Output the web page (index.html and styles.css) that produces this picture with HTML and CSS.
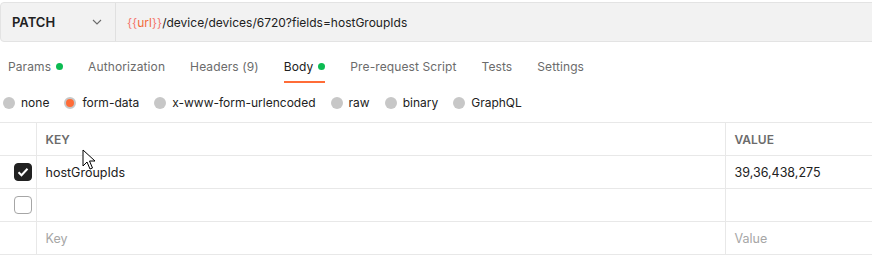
FILE: index.html
```html
<!DOCTYPE html>
<html lang="en">
<head>
  <meta charset="UTF-8">
  <title>PATCH request</title>
  <link rel="stylesheet" href="styles.css">
</head>
<body>
  <div class="url-bar">
    <div class="method">
      <span>PATCH</span>
      <svg class="chevron" width="10" height="6" viewBox="0 0 10 6"><path d="M1 1l4 4 4-4" fill="none" stroke="#6b6b6b" stroke-width="1.1"/></svg>
    </div>
    <div class="url"><span class="brace">{{</span><span class="var">url</span><span class="brace">}}</span>/device/devices/6720?fields=hostGroupIds</div>
  </div>

  <div class="tabs">
    <div class="tab">Params <span class="dot"></span></div>
    <div class="tab">Authorization</div>
    <div class="tab">Headers (9)</div>
    <div class="tab active">Body <span class="dot"></span></div>
    <div class="tab">Pre-request Script</div>
    <div class="tab">Tests</div>
    <div class="tab">Settings</div>
  </div>

  <div class="body-types">
    <label class="radio"><span class="circle"></span>none</label>
    <label class="radio"><span class="circle on"></span>form-data</label>
    <label class="radio"><span class="circle"></span>x-www-form-urlencoded</label>
    <label class="radio"><span class="circle"></span>raw</label>
    <label class="radio"><span class="circle"></span>binary</label>
    <label class="radio"><span class="circle"></span>GraphQL</label>
  </div>

  <div class="table-wrap">
    <table class="params">
      <colgroup>
        <col class="c-check">
        <col class="c-key">
        <col class="c-value">
      </colgroup>
      <thead>
        <tr>
          <th></th>
          <th>KEY</th>
          <th>VALUE</th>
        </tr>
      </thead>
      <tbody>
        <tr>
          <td class="check"><span class="box checked"><svg width="12" height="10" viewBox="0 0 12 10"><path d="M1.5 5.2l3 3 6-6.5" fill="none" stroke="#fff" stroke-width="2"/></svg></span></td>
          <td>hostGroupIds</td>
          <td>39,36,438,275</td>
        </tr>
        <tr>
          <td class="check"><span class="box"></span></td>
          <td></td>
          <td></td>
        </tr>
        <tr>
          <td></td>
          <td class="placeholder">Key</td>
          <td class="placeholder">Value</td>
        </tr>
      </tbody>
    </table>
    <svg class="cursor" width="14" height="22" viewBox="0 0 14 22"><path d="M1 1v16l4-4 3 7 2.5-1-3-7h5.5z" fill="#fff" stroke="#000" stroke-width="1"/></svg>
  </div>
</body>
</html>
```

FILE: styles.css
```css
body { margin: 0; font-family: Inter, "Noto Sans", sans-serif; font-size: 12px; color: #212121; background: #fff; overflow: hidden; }

.url-bar { display: flex; margin-top: 2px; width: 900px; height: 38px; background: #f2f2f2; border: 1px solid #e3e3e3; border-radius: 4px; }
.method { display: flex; align-items: center; justify-content: space-between; width: 115px; padding: 0 12px 0 11px; border-right: 1px solid #e0e0e0; font-weight: 600; font-size: 13px; box-sizing: border-box; }
.chevron { margin-right: 1px; }
.url { display: flex; align-items: center; padding-left: 11px; }
.brace { color: #f5766f; }
.var { color: #f26b3a; }

.tabs { display: flex; gap: 25px; padding: 0 8px; height: 37px; margin-top: 4px; letter-spacing: 0.1px; }
.tab { display: flex; align-items: center; gap: 5px; color: #6b6b6b; border-bottom: 2px solid transparent; box-sizing: border-box; padding-top: 6px; }
.tab.active { color: #212121; border-bottom-color: #ff6c37; }
.dot { width: 7px; height: 7px; border-radius: 50%; background: #0cbb52; }

.body-types { display: flex; gap: 15px; padding: 0 3px; height: 39px; align-items: center; }
.radio { display: flex; align-items: center; gap: 6px; color: #212121; }
.circle { width: 12px; height: 12px; border-radius: 50%; background: #c7c7c7; box-sizing: border-box; }
.circle.on { background: #ff6c37; border: 2px solid #c7c7c7; }

.table-wrap { position: relative; }
.params { width: 100%; border-collapse: collapse; border-top: 1px solid #e8e8e8; font-size: 12.5px; }
.c-check { width: 36px; }
.c-value { width: 147px; }
.params th, .params td { height: 32px; border-bottom: 1px solid #e8e8e8; border-left: 1px solid #e8e8e8; padding: 0 0 0 9px; text-align: left; }
.params th:first-child, .params td:first-child { border-left: none; padding: 0; }
.params th { font-size: 12px; font-weight: 600; color: #6b6b6b; }
.params td.check { padding-left: 14px; }
.box { display: flex; align-items: center; justify-content: center; width: 18px; height: 18px; border: 1px solid #a6a6a6; border-radius: 4px; box-sizing: border-box; }
.box.checked { background: #212121; border-color: #212121; }
.placeholder { color: #a6a6a6; }
.cursor { position: absolute; left: 82px; top: 27px; }
```
